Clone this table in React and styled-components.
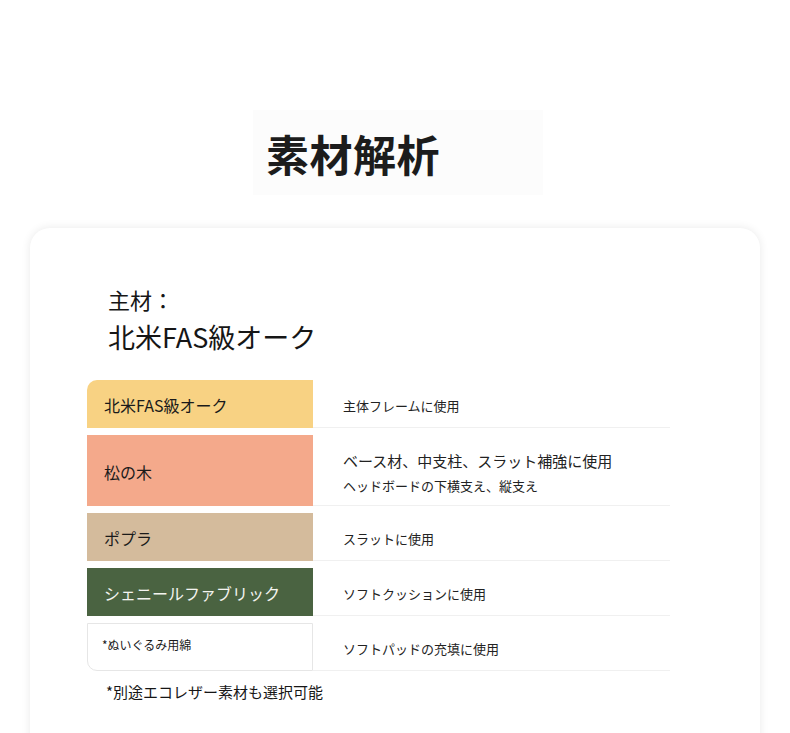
import React from "react";
import styled, { createGlobalStyle } from "styled-components";

const GlobalStyle = createGlobalStyle`
  body {
    margin: 0;
    background: #ffffff;
    font-family: "Noto Sans CJK JP", "Noto Sans", sans-serif;
    color: #222;
  }
`;

const Page = styled.div`
  width: 790px;
  height: 733px;
  overflow: hidden;
  padding-top: 110px;
  box-sizing: border-box;
`;

const TitleBox = styled.div`
  width: 290px;
  height: 85px;
  margin-left: 253px;
  padding-left: 13px;
  box-sizing: border-box;
  background: #fcfcfc;
  display: flex;
  align-items: center;
`;

const Title = styled.h1`
  margin: 0;
  font-size: 43px;
  font-weight: 700;
  color: #1c1c1c;
  letter-spacing: 0.5px;
`;

const Card = styled.section`
  margin: 33px 30px 0;
  width: 730px;
  height: 560px;
  background: #fff;
  border-radius: 20px;
  box-shadow: 0 0 10px rgba(0, 0, 0, 0.09);
  padding: 53px 90px 0 57px;
  box-sizing: border-box;
`;

const Heading = styled.div`
  margin-left: 21px;
  margin-bottom: 25px;
`;

const HeadLine = styled.div`
  font-size: ${(p) => p.size}px;
  line-height: 37px;
  color: #161616;
`;

const Table = styled.div`
  display: flex;
  flex-direction: column;
  gap: 7px;
`;

const Row = styled.div`
  display: flex;
  height: ${(p) => p.h}px;
`;

const Swatch = styled.div`
  width: 226px;
  flex-shrink: 0;
  box-sizing: border-box;
  display: flex;
  align-items: center;
  padding-left: ${(p) => (p.small ? 14 : 17)}px;
  background: ${(p) => p.bg};
  color: ${(p) => (p.light ? "#f4f4f0" : "#1a1a1a")};
  font-size: ${(p) => (p.small ? 12 : 16)}px;
  border: ${(p) => (p.outlined ? "1px solid #e6e6e6" : "none")};
  border-radius: ${(p) => p.radius || "0"};
  padding-top: ${(p) => (p.small ? 0 : 2)}px;
  padding-bottom: ${(p) => (p.small ? 6 : 0)}px;
`;

const Usage = styled.div`
  flex: 1;
  display: flex;
  flex-direction: column;
  justify-content: center;
  padding: 4px 0 0 30px;
  border-bottom: 1px solid #f0f0f0;
  color: #222;
`;

const UsageText = styled.div`
  font-size: ${(p) => (p.lead ? 15 : 13)}px;
  line-height: ${(p) => (p.lead ? 26 : 20)}px;
  margin-bottom: ${(p) => (p.lead ? 2 : 0)}px;
`;

const Note = styled.p`
  margin: 10px 0 0 19px;
  font-size: 15px;
  color: #161616;
`;

const rows = [
  { name: "北米FAS級オーク", bg: "#f8d283", h: 48, radius: "10px 0 0 0", usage: ["主体フレームに使用"] },
  { name: "松の木", bg: "#f4a98b", h: 71, usage: ["ベース材、中支柱、スラット補強に使用", "ヘッドボードの下横支え、縦支え"] },
  { name: "ポプラ", bg: "#d4bb9c", h: 48, usage: ["スラットに使用"] },
  { name: "シェニールファブリック", bg: "#4a6341", h: 48, light: true, usage: ["ソフトクッションに使用"] },
  { name: "*ぬいぐるみ用綿", bg: "#fff", h: 48, small: true, outlined: true, radius: "0 0 0 10px", usage: ["ソフトパッドの充填に使用"] },
];

const App = () => {
  return (
    <Page>
      <GlobalStyle />
      <TitleBox>
        <Title>素材解析</Title>
      </TitleBox>
      <Card>
        <Heading>
          <HeadLine size={22}>主材：</HeadLine>
          <HeadLine size={27}>北米FAS級オーク</HeadLine>
        </Heading>
        <Table>
          {rows.map((r) => (
            <Row key={r.name} h={r.h}>
              <Swatch
                bg={r.bg}
                light={r.light}
                small={r.small}
                outlined={r.outlined}
                radius={r.radius}
              >
                {r.name}
              </Swatch>
              <Usage>
                {r.usage.map((u, i) => (
                  <UsageText key={u} lead={r.usage.length > 1 && i === 0}>
                    {u}
                  </UsageText>
                ))}
              </Usage>
            </Row>
          ))}
        </Table>
        <Note>*別途エコレザー素材も選択可能</Note>
      </Card>
    </Page>
  );
};

export default App;
